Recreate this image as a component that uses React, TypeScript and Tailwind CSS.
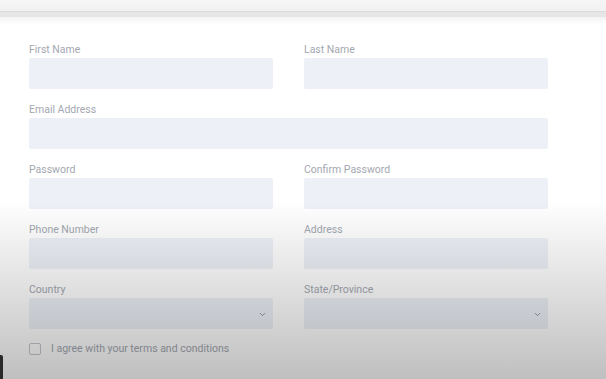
import { ChevronDown } from "lucide-react"

const Field = ({ label, wide }: { label: string; wide?: boolean }) => {
   return (
      <div className={wide ? "col-span-2 w-[519px]" : "w-[244px]"}>
         <label className="block text-[10.5px] leading-[14px] pt-[1px] mb-[1px] text-[#a3a8b1]">{label}</label>
         <input className="block w-full h-[31px] rounded-[2px] bg-[#edf1f7] outline-none" />
      </div>
   )
}

const Select = ({ label }: { label: string }) => {
   return (
      <div className="w-[244px]">
         <label className="block text-[10.5px] leading-[14px] pt-[1px] mb-[1px] text-[#a3a8b1]">{label}</label>
         <div className="relative h-[31px] rounded-[2px] bg-[#edf1f7]">
            <select className="w-full h-full appearance-none bg-transparent outline-none" />
            <ChevronDown className="absolute right-[6px] top-[12px] text-[#8a9099]" size={9} strokeWidth={2.5} />
         </div>
      </div>
   )
}

export default function App() {
   return (
      <div className="relative w-[606px] h-[379px] overflow-hidden bg-white font-['Roboto',sans-serif]">
         <div className="h-[11px] bg-gradient-to-b from-[#f6f6f6] to-[#f1f1f1]" />
         <div className="h-[6px] bg-[#e6e6e6] border-t border-[#dcdcdc]" />
         <div className="h-[8px] bg-gradient-to-b from-[#f3f3f3] to-white" />

         <form className="grid grid-cols-[244px_244px] gap-x-[31px] gap-y-[13px] pl-[29px] pt-[17px]">
            <Field label="First Name" />
            <Field label="Last Name" />
            <Field label="Email Address" wide />
            <Field label="Password" />
            <Field label="Confirm Password" />
            <Field label="Phone Number" />
            <Field label="Address" />
            <Select label="Country" />
            <Select label="State/Province" />
            <label className="col-span-2 flex items-center gap-[10px]">
               <span className="w-[12px] h-[12px] rounded-[2px] border border-[#c4c8ce] bg-white" />
               <span className="text-[10.5px] leading-[14px] text-[#a3a8b1]">I agree with your terms and conditions</span>
            </label>
         </form>

         <div className="pointer-events-none absolute inset-x-0 top-[200px] bottom-0 bg-gradient-to-b from-transparent to-black/25" />
         <div className="absolute left-0 bottom-0 w-[3px] h-[24px] rounded-tr-[2px] bg-[#2a2a2a]" />
      </div>
   )
}
